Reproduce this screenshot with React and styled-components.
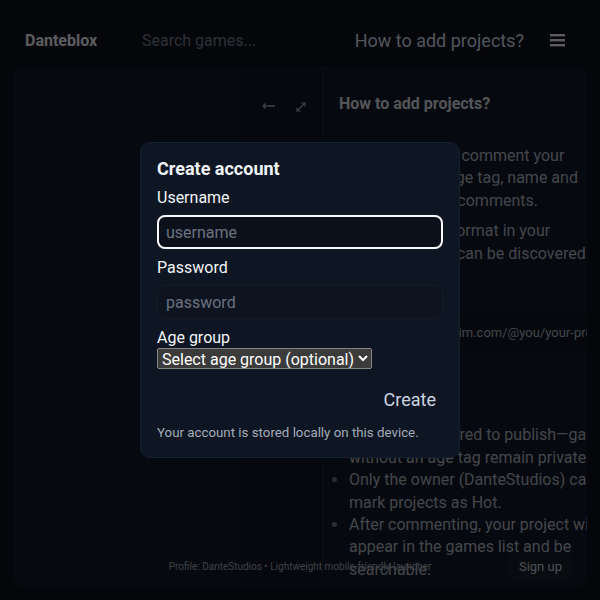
import styled, { createGlobalStyle } from "styled-components";

const GlobalStyle = createGlobalStyle`
  * { box-sizing: border-box; }
  body {
    margin: 0;
    background: #0a0f19;
    font-family: Roboto, "Liberation Sans", sans-serif;
    color: #e5e7eb;
  }
  #root { height: 600px; }
`;

const Page = styled.div`
  height: 600px;
  display: flex;
  flex-direction: column;
  overflow: hidden;
`;

const Header = styled.header`
  display: flex;
  align-items: center;
  padding: 28px 34px 14px 25px;
  height: 66px;
`;

const Brand = styled.div`
  font-size: 16px;
  font-weight: 700;
  color: #e5e7eb;
  width: 117px;
`;

const Search = styled.input`
  flex: 1;
  background: transparent;
  border: none;
  outline: none;
  font: 16px Roboto, sans-serif;
  color: #e5e7eb;
  padding: 0;
  &::placeholder { color: #737b8c; }
`;

const HelpLink = styled.button`
  background: transparent;
  border: none;
  color: #cbd5e1;
  font: 18px Roboto, sans-serif;
  padding: 0;
  margin-right: 26px;
`;

const MenuButton = styled.button`
  background: transparent;
  border: none;
  padding: 0;
  display: flex;
  color: #e5e7eb;
`;

const Card = styled.main`
  margin: 0 13px;
  height: 521px;
  border-radius: 12px;
  background: #111827;
  display: flex;
  flex-direction: column;
  overflow: hidden;
`;

const Body = styled.div`
  flex: 1;
  min-height: 0;
  display: grid;
  grid-template-columns: 227px 82px 322px;
`;

const ListPane = styled.section``;

const ViewerPane = styled.section`
  background: #0f1522;
  display: flex;
  justify-content: flex-end;
  align-items: flex-start;
  gap: 19px;
  padding: 35px 15px 0 0;
  color: #9ca3af;
`;

const IconButton = styled.span`
  display: flex;
`;

const HelpPane = styled.aside`
  background: #111827;
  border-left: 1px solid #1a2232;
  padding: 27px 17px 0 16px;
  color: #a7afbb;
  font-size: 16px;
  line-height: 22.4px;
`;

const HelpTitle = styled.h3`
  margin: 0 0 30px;
  font-size: 16px;
  line-height: 22px;
  font-weight: 700;
  color: #d1d5db;
`;

const HelpText = styled.p`
  margin: 0 0 8px;
`;

const Code = styled.div`
  margin: 50px 0 0;
  padding: 10px 12px;
  font-size: 13px;
  line-height: 16px;
  white-space: nowrap;
  background: #0f1522;
  border-radius: 6px;
`;

const SubTitle = styled.div`
  margin: 45px 0 6px;
  font-weight: 700;
`;

const Rules = styled.ul`
  margin: 0;
  padding-left: 10px;
  li::marker { color: #6b7280; }
`;

const Footer = styled.footer`
  height: 40px;
  display: grid;
  grid-template-columns: 1fr auto 1fr;
  align-items: center;
  padding: 0 13px 2px;
`;

const FooterText = styled.div`
  grid-column: 2;
  font-size: 10px;
  color: #9ca3af;
`;

const SignUp = styled.button`
  justify-self: end;
  background: #151c29;
  border: none;
  border-radius: 8px;
  color: #c0c6cf;
  font: 13px Roboto, sans-serif;
  padding: 7px 12px;
`;

const Overlay = styled.div`
  position: fixed;
  inset: 0;
  background: rgba(0, 0, 0, 0.6);
  display: flex;
  align-items: center;
  justify-content: center;
`;

const Modal = styled.form`
  width: 320px;
  background: #0f1623;
  border: 1px solid #161f2e;
  border-radius: 10px;
  padding: 15px 16px 16px;
  display: flex;
  flex-direction: column;
  color: #f1f5f9;
`;

const ModalTitle = styled.h2`
  margin: 0 0 8px;
  font-size: 18px;
  line-height: 22px;
  font-weight: 700;
`;

const Label = styled.label`
  font-size: 16px;
  line-height: 20px;
`;

const Input = styled.input`
  display: block;
  width: 100%;
  height: 34px;
  margin: 7px 0 9px;
  border-radius: 8px;
  font: 16px Roboto, sans-serif;
  color: #f1f5f9;
  outline: none;
  background: ${(p) => (p.$focused ? "#0b111b" : "#0d1420")};
  border: ${(p) => (p.$focused ? "2px solid #f8fafc" : "1px solid #141c2a")};
  padding: 0 ${(p) => (p.$focused ? "7px" : "8px")};
  &::placeholder { color: #6b7280; }
`;

const Select = styled.select`
  color-scheme: dark;
  align-self: flex-start;
  font: 16px Roboto, sans-serif;
  height: 21px;
`;

const Actions = styled.div`
  display: flex;
  justify-content: flex-end;
  margin-top: 13px;
`;

const CreateButton = styled.button`
  background: transparent;
  border: none;
  color: #cbd5e1;
  font: 18px Roboto, sans-serif;
  padding: 7px 7px;
`;

const Note = styled.p`
  margin: 8px 0 0;
  font-size: 13.3px;
  line-height: 16px;
  color: #a3acb9;
`;

function MenuIcon() {
  return (
    <svg width="16" height="14" viewBox="0 0 16 14">
      <rect x="0" y="1" width="15" height="2.4" fill="currentColor" />
      <rect x="0" y="6" width="15" height="2.4" fill="currentColor" />
      <rect x="0" y="11" width="15" height="2.4" fill="currentColor" />
    </svg>
  );
}

function BackIcon() {
  return (
    <svg width="14" height="10" viewBox="0 0 14 10" fill="none" stroke="currentColor" strokeWidth="1.3">
      <path d="M1 5 H13" />
      <path d="M3.5 2.5 L1 5 L3.5 7.5" />
    </svg>
  );
}

function ExpandIcon() {
  return (
    <svg width="12" height="12" viewBox="0 0 12 12" fill="none" stroke="currentColor" strokeWidth="1.2">
      <path d="M2 10 L10 2" />
      <path d="M6.5 2 H10 V5.5" />
      <path d="M2 6.5 V10 H5.5" />
    </svg>
  );
}

export default function App() {
  return (
    <>
      <GlobalStyle />
      <Page>
        <Header>
          <Brand>Danteblox</Brand>
          <Search placeholder="Search games..." />
          <HelpLink>How to add projects?</HelpLink>
          <MenuButton>
            <MenuIcon />
          </MenuButton>
        </Header>
        <Card>
          <Body>
            <ListPane />
            <ViewerPane>
              <IconButton>
                <BackIcon />
              </IconButton>
              <IconButton>
                <ExpandIcon />
              </IconButton>
            </ViewerPane>
            <HelpPane>
              <HelpTitle>How to add projects?</HelpTitle>
              <HelpText>
                To add a project: comment your description, an age tag, name and
                thumbnail in the comments.
              </HelpText>
              <HelpText>
                Please use this format in your description so it can be discovered:
              </HelpText>
              <Code>https://www.pixelsim.com/@you/your-project</Code>
              <SubTitle>Rules</SubTitle>
              <Rules>
                <li>Age tag is required to publish—games without an age tag remain private.</li>
                <li>Only the owner (DanteStudios) can mark projects as Hot.</li>
                <li>After commenting, your project will appear in the games list and be searchable.</li>
              </Rules>
            </HelpPane>
          </Body>
          <Footer>
            <FooterText>Profile: DanteStudios • Lightweight mobile-friendly launcher</FooterText>
            <SignUp>Sign up</SignUp>
          </Footer>
        </Card>
      </Page>
      <Overlay>
        <Modal onSubmit={(e) => e.preventDefault()}>
          <ModalTitle>Create account</ModalTitle>
          <Label>
            Username
            <Input $focused placeholder="username" />
          </Label>
          <Label>
            Password
            <Input type="password" placeholder="password" />
          </Label>
          <Label htmlFor="age">Age group</Label>
          <Select id="age" defaultValue="">
            <option value="">Select age group (optional)</option>
            <option value="u13">Under 13</option>
            <option value="13">13+</option>
            <option value="18">18+</option>
          </Select>
          <Actions>
            <CreateButton type="submit">Create</CreateButton>
          </Actions>
          <Note>Your account is stored locally on this device.</Note>
        </Modal>
      </Overlay>
    </>
  );
}
